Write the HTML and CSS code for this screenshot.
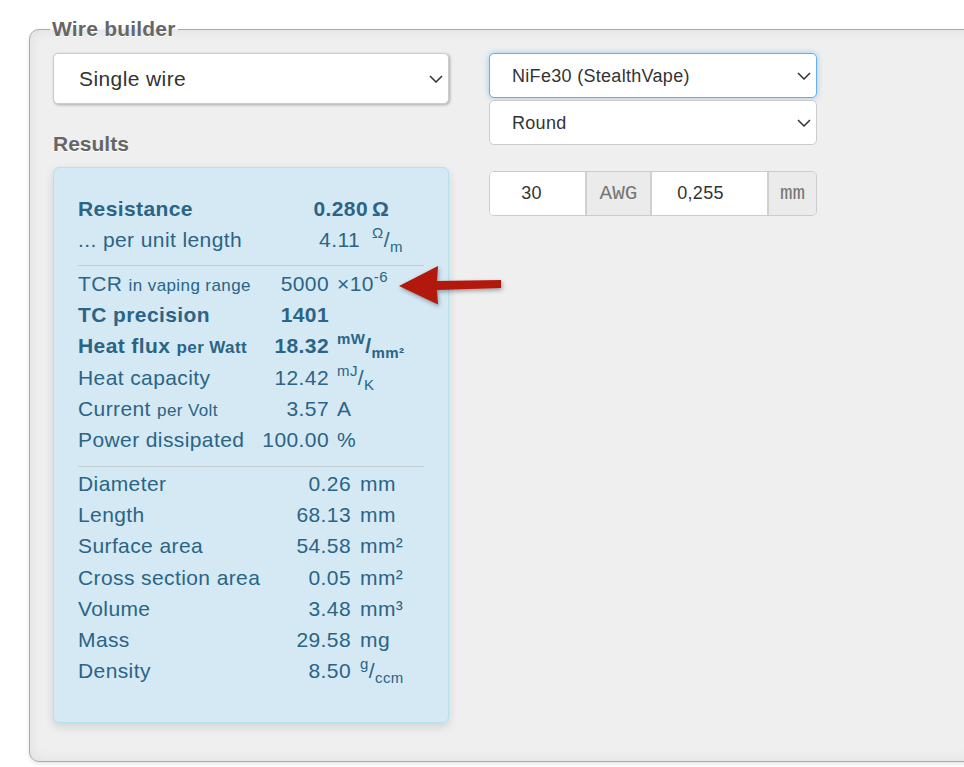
FILE: index.html
```html
<!DOCTYPE html>
<html lang="en">

<head>
    <meta charset="UTF-8">
    <meta name="viewport" content="width=device-width, initial-scale=1.0">
    <title>Wire builder</title>
    <link rel="stylesheet" href="styles.css">
</head>

<body>
    <div class="page">
        <fieldset class="builder">
            <legend>Wire builder</legend>
            <div class="columns">
                <div class="col-left">
                    <div class="pick">
                        <select class="sel sel-big">
                            <option>Single wire</option>
                        </select>
                        <svg class="chev" width="14" height="8" viewBox="0 0 14 8"><polyline points="1,1 7,7 13,1" /></svg>
                    </div>

                    <h3 class="title">Results</h3>
                    <div class="results">
                        <div class="stats stats-main">
                            <span class="strong">Resistance</span><span class="val strong">0.280</span><span class="strong">&Omega;</span>
                            <span>... per unit length</span><span class="val val-pad">4.11</span><span><sup>&Omega;</sup>/<sub>m</sub></span>
                        </div>
                        <hr>
                        <div class="stats stats-coil">
                            <span>TCR <small>in vaping range</small></span><span class="val">5000</span><span>&times;10<sup>-6</sup></span>
                            <span class="strong">TC precision</span><span class="val strong">1401</span><span></span>
                            <span class="strong">Heat flux <small>per Watt</small></span><span class="val strong">18.32</span><span class="strong"><sup>mW</sup>/<sub>mm&sup2;</sub></span>
                            <span>Heat capacity</span><span class="val">12.42</span><span><sup>mJ</sup>/<sub>K</sub></span>
                            <span>Current <small>per Volt</small></span><span class="val">3.57</span><span>A</span>
                            <span>Power dissipated</span><span class="val">100.00</span><span>%</span>
                        </div>
                        <hr>
                        <div class="stats stats-size">
                            <span>Diameter</span><span class="val">0.26</span><span>mm</span>
                            <span>Length</span><span class="val">68.13</span><span>mm</span>
                            <span>Surface area</span><span class="val">54.58</span><span>mm&sup2;</span>
                            <span>Cross section area</span><span class="val">0.05</span><span>mm&sup2;</span>
                            <span>Volume</span><span class="val">3.48</span><span>mm&sup3;</span>
                            <span>Mass</span><span class="val">29.58</span><span>mg</span>
                            <span>Density</span><span class="val">8.50</span><span><sup>g</sup>/<sub>ccm</sub></span>
                        </div>
                    </div>
                </div>

                <div class="col-right">
                    <div class="pick">
                        <select class="sel sel-focus">
                            <option>NiFe30 (StealthVape)</option>
                        </select>
                        <svg class="chev" width="14" height="8" viewBox="0 0 14 8"><polyline points="1,1 7,7 13,1" /></svg>
                    </div>
                    <div class="pick pick-gap">
                        <select class="sel">
                            <option>Round</option>
                        </select>
                        <svg class="chev" width="14" height="8" viewBox="0 0 14 8"><polyline points="1,1 7,7 13,1" /></svg>
                    </div>

                    <div class="gauge">
                        <input class="gauge-in gauge-awg" type="text" value="30">
                        <span class="addon addon-awg">AWG</span>
                        <input class="gauge-in gauge-mm" type="text" value="0,255">
                        <span class="addon addon-mm">mm</span>
                    </div>
                </div>
            </div>
        </fieldset>

        <!-- red pointer next to the TCR row -->
        <svg class="arrow" width="110" height="50" viewBox="395 260 110 50">
            <polygon points="399,286 438,266 437,281 501,280 501,288 437,290 438,304.5" />
        </svg>
    </div>
</body>

</html>
```

FILE: styles.css
```css
html,
body {
    margin: 0;
    padding: 0;
    background: #fff;
    overflow: hidden;
}

.page {
    position: relative;
    padding: 17px 0 5px 29px;
    font-family: "Liberation Sans", Arial, sans-serif;
}

.builder {
    margin: 0 -14px 0 0;
    min-width: 0;
    padding: 12px 23px 38px 23px;
    border: 1px solid #aaa;
    border-radius: 10px;
    background: #efefef;
    box-shadow: inset 0 0 14px rgba(0, 0, 0, 0.07), 0 2px 4px rgba(0, 0, 0, 0.1);
}

.builder legend {
    margin-left: -3px;
    padding: 0 2px;
    font-size: 21px;
    line-height: 24px;
    font-weight: bold;
    letter-spacing: 0.2px;
    color: #666;
    text-shadow: 0 1px 0 #fff;
}

.columns {
    display: flex;
    gap: 40px;
    align-items: flex-start;
}

.col-left {
    width: 396px;
}

.col-right {
    width: 328px;
}

/* selects */

.pick {
    position: relative;
}

.pick-gap {
    margin-top: 2px;
}

.sel {
    display: block;
    width: 100%;
    height: 45px;
    margin: 0;
    padding: 0 30px 0 22px;
    appearance: none;
    -webkit-appearance: none;
    background: #fff;
    border: 1px solid #ccc;
    border-radius: 5px;
    font-family: "Liberation Sans", Arial, sans-serif;
    font-size: 18px;
    letter-spacing: 0.3px;
    color: #333;
    outline: none;
}

.sel-big {
    height: 51px;
    padding-left: 25px;
    font-size: 21px;
    letter-spacing: 0.4px;
    box-shadow: 1px 1px 3px rgba(0, 0, 0, 0.3);
}

.sel-focus {
    border-color: #66afe9;
    box-shadow: 0 0 6px rgba(102, 175, 233, 0.6);
}

.chev {
    position: absolute;
    right: 6px;
    top: 50%;
    margin-top: -4px;
    pointer-events: none;
}

.chev polyline {
    fill: none;
    stroke: #333;
    stroke-width: 1.5;
}

/* gauge input group */

.gauge {
    display: flex;
    height: 45px;
    margin-top: 26px;
    box-sizing: border-box;
    border: 1px solid #ccc;
    border-radius: 5px;
    overflow: hidden;
    background: #fff;
}

.gauge-in {
    margin: 0;
    border: none;
    outline: none;
    box-sizing: border-box;
    height: 100%;
    text-align: center;
    font-family: "Liberation Sans", Arial, sans-serif;
    font-size: 18px;
    letter-spacing: 0.3px;
    color: #333;
    background: #fff;
}

.gauge-awg {
    width: 95px;
    padding: 0 12px 0 0;
}

.gauge-mm {
    width: 117px;
    padding: 0 18px 0 0;
    border-left: 2px solid #d0d0d0;
}

.addon {
    display: flex;
    align-items: center;
    justify-content: center;
    box-sizing: border-box;
    border-left: 2px solid #d0d0d0;
    background: #ebebeb;
    font-family: "Liberation Mono", "Courier New", monospace;
    font-size: 21px;
    color: #777;
}

.addon-awg {
    width: 65px;
}

.addon-mm {
    width: 49px;
}

/* results */

.title {
    margin: 28px 0 11px;
    font-size: 21px;
    line-height: 24px;
    font-weight: bold;
    color: #666;
    text-shadow: 0 1px 0 #fff;
}

.results {
    padding: 24.6px 24px 36px;
    background: #d4e9f4;
    border: 1px solid #b3e1ee;
    border-radius: 6px;
    box-shadow: 0 4px 10px rgba(0, 0, 0, 0.12);
    color: #2b6485;
    font-size: 21px;
    letter-spacing: 0.4px;
}

.results hr {
    margin: 10.5px 0 1.5px;
    border: none;
    height: 1px;
    background: #c2ced4;
}

.stats {
    display: grid;
    grid-auto-rows: 31.2px;
    line-height: 31.2px;
    white-space: nowrap;
}

.stats-main {
    grid-template-columns: 196px 90px auto;
    column-gap: 4px;
}

.stats-coil {
    grid-template-columns: 176px 67px auto;
    column-gap: 8px;
}

.stats-size {
    grid-template-columns: 204px 60px auto;
    column-gap: 9px;
}

.val {
    text-align: right;
}

.val-pad {
    padding-right: 8px;
}

.strong {
    font-weight: bold;
}

.stats small {
    font-size: 17px;
    letter-spacing: 0.4px;
}

.stats sup,
.stats sub {
    font-size: 15px;
    line-height: 0;
}

.stats sup {
    vertical-align: 9px;
}

.stats sub {
    vertical-align: -5px;
}

/* pointer */

.arrow {
    position: absolute;
    left: 395px;
    top: 260px;
    pointer-events: none;
    overflow: visible;
    filter: drop-shadow(1px 2px 2px rgba(0, 0, 0, 0.35));
}

.arrow polygon {
    fill: #b2190c;
}
```
